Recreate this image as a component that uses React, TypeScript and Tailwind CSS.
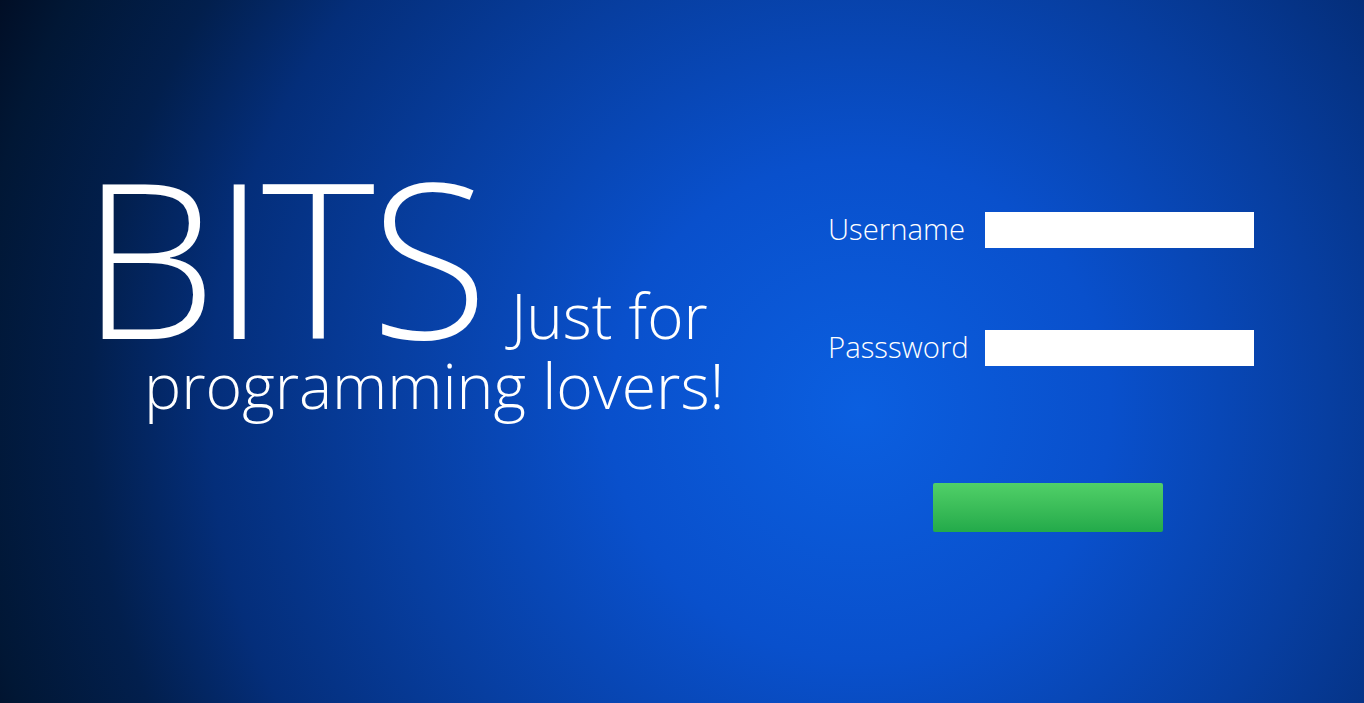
import React from "react";

export default function App() {
  return (
    <div
      className="w-[1364px] h-[703px] overflow-hidden relative text-white font-light"
      style={{
        fontFamily: '"Open Sans", "Noto Sans", sans-serif',
        background:
          "radial-gradient(circle at 860px 410px, #0b5fe0 0px, #0950cc 250px, #073ea0 470px, #042e7a 650px, #021f4d 770px, #011735 890px, #010d24 960px)",
      }}
    >
      <div className="flex h-full">
        <div className="w-[800px] pt-[147px] pl-[81px]">
          <div className="flex items-baseline leading-none">
            <span className="text-[216px] tracking-[-4.5px] leading-[216px]">BITS</span>
            <span className="text-[62px] ml-[27px]">Just for</span>
          </div>
          <div className="text-[62.5px] leading-none ml-[63px] mt-[-9px]">programming lovers!</div>
        </div>
        <div className="flex-1 pt-[212px] pl-[1px]">
          <div className="flex items-center h-[36px]">
            <label className="w-[157px] text-[29.3px] ml-[27px]">Username</label>
            <input className="w-[269px] h-[36px] bg-white border-0 outline-none text-black px-2" />
          </div>
          <div className="flex items-center h-[36px] mt-[82px]">
            <label className="w-[157px] text-[29.3px] ml-[27px]">Passsword</label>
            <input type="password" className="w-[269px] h-[36px] bg-white border-0 outline-none text-black px-2" />
          </div>
          <button className="block ml-[132px] mt-[117px] w-[230px] h-[49px] rounded-[2px] bg-gradient-to-b from-[#50d068] to-[#22aa4a]" />
        </div>
      </div>
    </div>
  );
}
